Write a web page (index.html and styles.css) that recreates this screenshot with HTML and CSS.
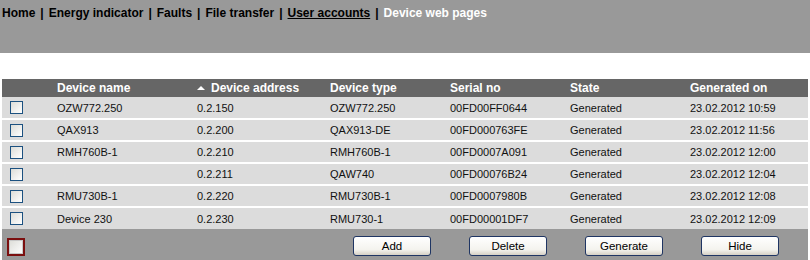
FILE: index.html
```html
<!DOCTYPE html>
<html lang="en">
<head>
  <meta charset="UTF-8">
  <title>Device web pages</title>
  <link rel="stylesheet" href="styles.css">
</head>
<body>
  <!-- Barre de navigation -->
  <div class="nav">
    <a href="#">Home</a><span class="sep">|</span><a href="#">Energy indicator</a><span class="sep">|</span><a href="#">Faults</a><span class="sep">|</span><a href="#">File transfer</a><span class="sep">|</span><a href="#" class="underline">User accounts</a><span class="sep">|</span><span class="current">Device web pages</span>
  </div>

  <!-- Liste des pages web -->
  <table class="devices">
    <thead>
      <tr>
        <th class="col-check"></th>
        <th class="col-name">Device name</th>
        <th class="col-address"><span class="sort-up"></span>Device address</th>
        <th class="col-type">Device type</th>
        <th class="col-serial">Serial no</th>
        <th class="col-state">State</th>
        <th class="col-date">Generated on</th>
      </tr>
    </thead>
    <tbody>
      <tr>
        <td><input type="checkbox" class="check"></td>
        <td>OZW772.250</td><td>0.2.150</td><td>OZW772.250</td><td>00FD00FF0644</td><td>Generated</td><td>23.02.2012 10:59</td>
      </tr>
      <tr>
        <td><input type="checkbox" class="check"></td>
        <td>QAX913</td><td>0.2.200</td><td>QAX913-DE</td><td>00FD000763FE</td><td>Generated</td><td>23.02.2012 11:56</td>
      </tr>
      <tr>
        <td><input type="checkbox" class="check"></td>
        <td>RMH760B-1</td><td>0.2.210</td><td>RMH760B-1</td><td>00FD0007A091</td><td>Generated</td><td>23.02.2012 12:00</td>
      </tr>
      <tr>
        <td><input type="checkbox" class="check"></td>
        <td></td><td>0.2.211</td><td>QAW740</td><td>00FD00076B24</td><td>Generated</td><td>23.02.2012 12:04</td>
      </tr>
      <tr>
        <td><input type="checkbox" class="check"></td>
        <td>RMU730B-1</td><td>0.2.220</td><td>RMU730B-1</td><td>00FD0007980B</td><td>Generated</td><td>23.02.2012 12:08</td>
      </tr>
      <tr>
        <td><input type="checkbox" class="check"></td>
        <td>Device 230</td><td>0.2.230</td><td>RMU730-1</td><td>00FD00001DF7</td><td>Generated</td><td>23.02.2012 12:09</td>
      </tr>
    </tbody>
  </table>

  <!-- Actions -->
  <div class="footer">
    <input type="checkbox" class="check check-all">
    <div class="actions">
      <button>Add</button>
      <button>Delete</button>
      <button>Generate</button>
      <button>Hide</button>
    </div>
  </div>
</body>
</html>
```

FILE: styles.css
```css
/* Base */
* {
  box-sizing: border-box;
}
body {
  margin: 0;
  font-family: 'Liberation Sans', Arial, sans-serif;
  font-size: 11px;
  color: #111;
  background-color: #fff;
}
/* Navigation */
.nav {
  background-color: #999;
  height: 53px;
  padding: 6px 2px 0;
  font-size: 12px;
  font-weight: bold;
  color: #000;
  margin-bottom: 26px;
}
.nav a {
  color: #000;
  text-decoration: none;
}
.nav a.underline {
  text-decoration: underline;
}
.nav .sep {
  margin: 0 5px;
}
.nav .current {
  color: #fff;
}
/* Tableau */
.devices {
  width: 806px;
  margin: 0 2px;
  border-collapse: collapse;
  table-layout: fixed;
}
.devices th {
  background-color: #666;
  color: #fff;
  font-size: 12px;
  font-weight: bold;
  text-align: left;
  height: 18px;
  padding: 0 0 0 7px;
}
.devices td {
  background-color: #dcdcdc;
  height: 22px;
  padding: 0 0 0 7px;
  border-top: 2px solid #fff;
  white-space: nowrap;
}
.devices tbody tr:first-child td {
  border-top: none;
}
.col-check { width: 48px; }
.col-name { width: 140px; }
.col-address { width: 133px; }
.col-type { width: 120px; }
.col-serial { width: 120px; }
.col-state { width: 120px; }
.col-date { width: 125px; }
.sort-up {
  display: inline-block;
  width: 0;
  height: 0;
  border-left: 4px solid transparent;
  border-right: 4px solid transparent;
  border-bottom: 4px solid #fff;
  margin: 0 6px 2px 0;
  vertical-align: middle;
}
/* Cases à cocher */
.check {
  appearance: none;
  -webkit-appearance: none;
  display: block;
  width: 13px;
  height: 13px;
  margin: 0 0 0 1px;
  border: 1px solid #1c5180;
  background: linear-gradient(135deg, #dcdcd7, #fff);
}
/* Pied */
.footer {
  background-color: #999;
  height: 31px;
  margin: 0 2px;
  display: flex;
  align-items: center;
  justify-content: space-between;
  padding: 0 29px 0 5px;
}
.check-all {
  width: 18px;
  height: 18px;
  margin: 4px 0 0 0;
  border: 2px solid #7b0f0f;
  box-shadow: inset 0 0 0 1px #c8c8c8;
}
.actions {
  display: flex;
  gap: 38px;
  padding-top: 3px;
}
.actions button {
  width: 78px;
  height: 20px;
  font-family: 'Liberation Sans', Arial, sans-serif;
  font-size: 11.5px;
  color: #000;
  border: 1px solid #1f3563;
  border-radius: 3px;
  background: linear-gradient(#fff, #f4f3ee 70%, #d6d0c5);
  padding: 0;
}
```
